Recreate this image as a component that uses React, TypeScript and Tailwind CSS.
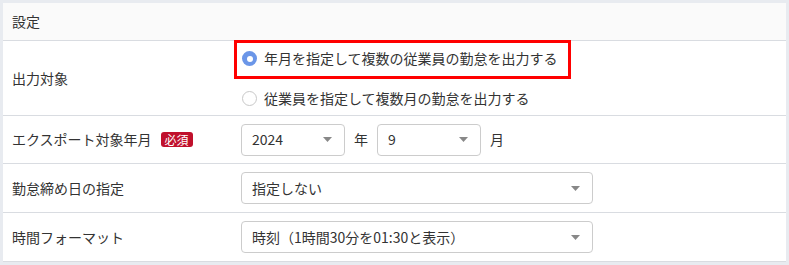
import React from "react";

const font = { fontFamily: '"Noto Sans CJK JP", "Noto Sans", sans-serif' };

function Caret() {
  return (
    <svg width="9" height="5" viewBox="0 0 9 5" className="shrink-0">
      <path d="M0 0 L9 0 L4.5 5 Z" fill="#888" />
    </svg>
  );
}

function Select({ value, width }: { value: string; width: string }) {
  return (
    <div
      className={`flex h-[32px] items-center justify-between rounded-[4px] border border-[#ccc] bg-white pl-[10px] pr-[12px] ${width}`}
    >
      <span className="text-[14px] text-[#333]">{value}</span>
      <Caret />
    </div>
  );
}

function Radio({ checked, label }: { checked?: boolean; label: string }) {
  return (
    <label className="flex items-center gap-[7px] text-[14px] text-[#333]">
      {checked ? (
        <span className="flex h-[15px] w-[15px] items-center justify-center rounded-full bg-[#6b96e8]">
          <span className="h-[6px] w-[6px] rounded-full bg-white" />
        </span>
      ) : (
        <span className="h-[15px] w-[15px] rounded-full border border-[#c8c8c8] bg-white" />
      )}
      {label}
    </label>
  );
}

export default function App() {
  return (
    <div className="h-[265px] w-[789px] overflow-hidden bg-[#e8ebf0] px-[3px] pt-[3px]" style={font}>
      <div className="bg-white">
        <div className="flex h-[38px] items-center border-b border-[#d9dce1] bg-[#fafafa] pl-[9px] text-[14px] text-[#333]">
          設定
        </div>

        <div className="relative grid h-[75px] grid-cols-[238px_1fr] border-b border-[#d9dce1]">
          <div className="flex items-center pl-[9px] text-[14px] text-[#333]">出力対象</div>
          <div className="flex flex-col justify-center gap-[19px] pl-[1px] pt-[1px]">
            <Radio checked label="年月を指定して複数の従業員の勤怠を出力する" />
            <Radio label="従業員を指定して複数月の勤怠を出力する" />
          </div>
          <div className="absolute left-[231px] top-[-1px] h-[39px] w-[337px] border-[3px] border-[#ff0000]" />
        </div>

        <div className="grid h-[48px] grid-cols-[238px_1fr] border-b border-[#d9dce1]">
          <div className="flex items-center pl-[9px] text-[14px] text-[#333]">
            エクスポート対象年月
            <span className="ml-[9px] rounded-[3px] bg-[#c0102c] px-[4px] text-[12px] leading-[15px] text-white">
              必須
            </span>
          </div>
          <div className="flex items-center text-[14px] text-[#333]">
            <Select value="2024" width="w-[104px]" />
            <span className="ml-[9px] mr-[9px]">年</span>
            <Select value="9" width="w-[104px]" />
            <span className="ml-[9px]">月</span>
          </div>
        </div>

        <div className="grid h-[49px] grid-cols-[238px_1fr] border-b border-[#d9dce1]">
          <div className="flex items-center pl-[9px] text-[14px] text-[#333]">勤怠締め日の指定</div>
          <div className="flex items-center">
            <Select value="指定しない" width="w-[352px]" />
          </div>
        </div>

        <div className="grid h-[49px] grid-cols-[238px_1fr] border-b border-[#d9dce1]">
          <div className="flex items-center pl-[9px] text-[14px] text-[#333]">時間フォーマット</div>
          <div className="flex items-center">
            <Select value="時刻（1時間30分を01:30と表示）" width="w-[352px]" />
          </div>
        </div>
      </div>
    </div>
  );
}
